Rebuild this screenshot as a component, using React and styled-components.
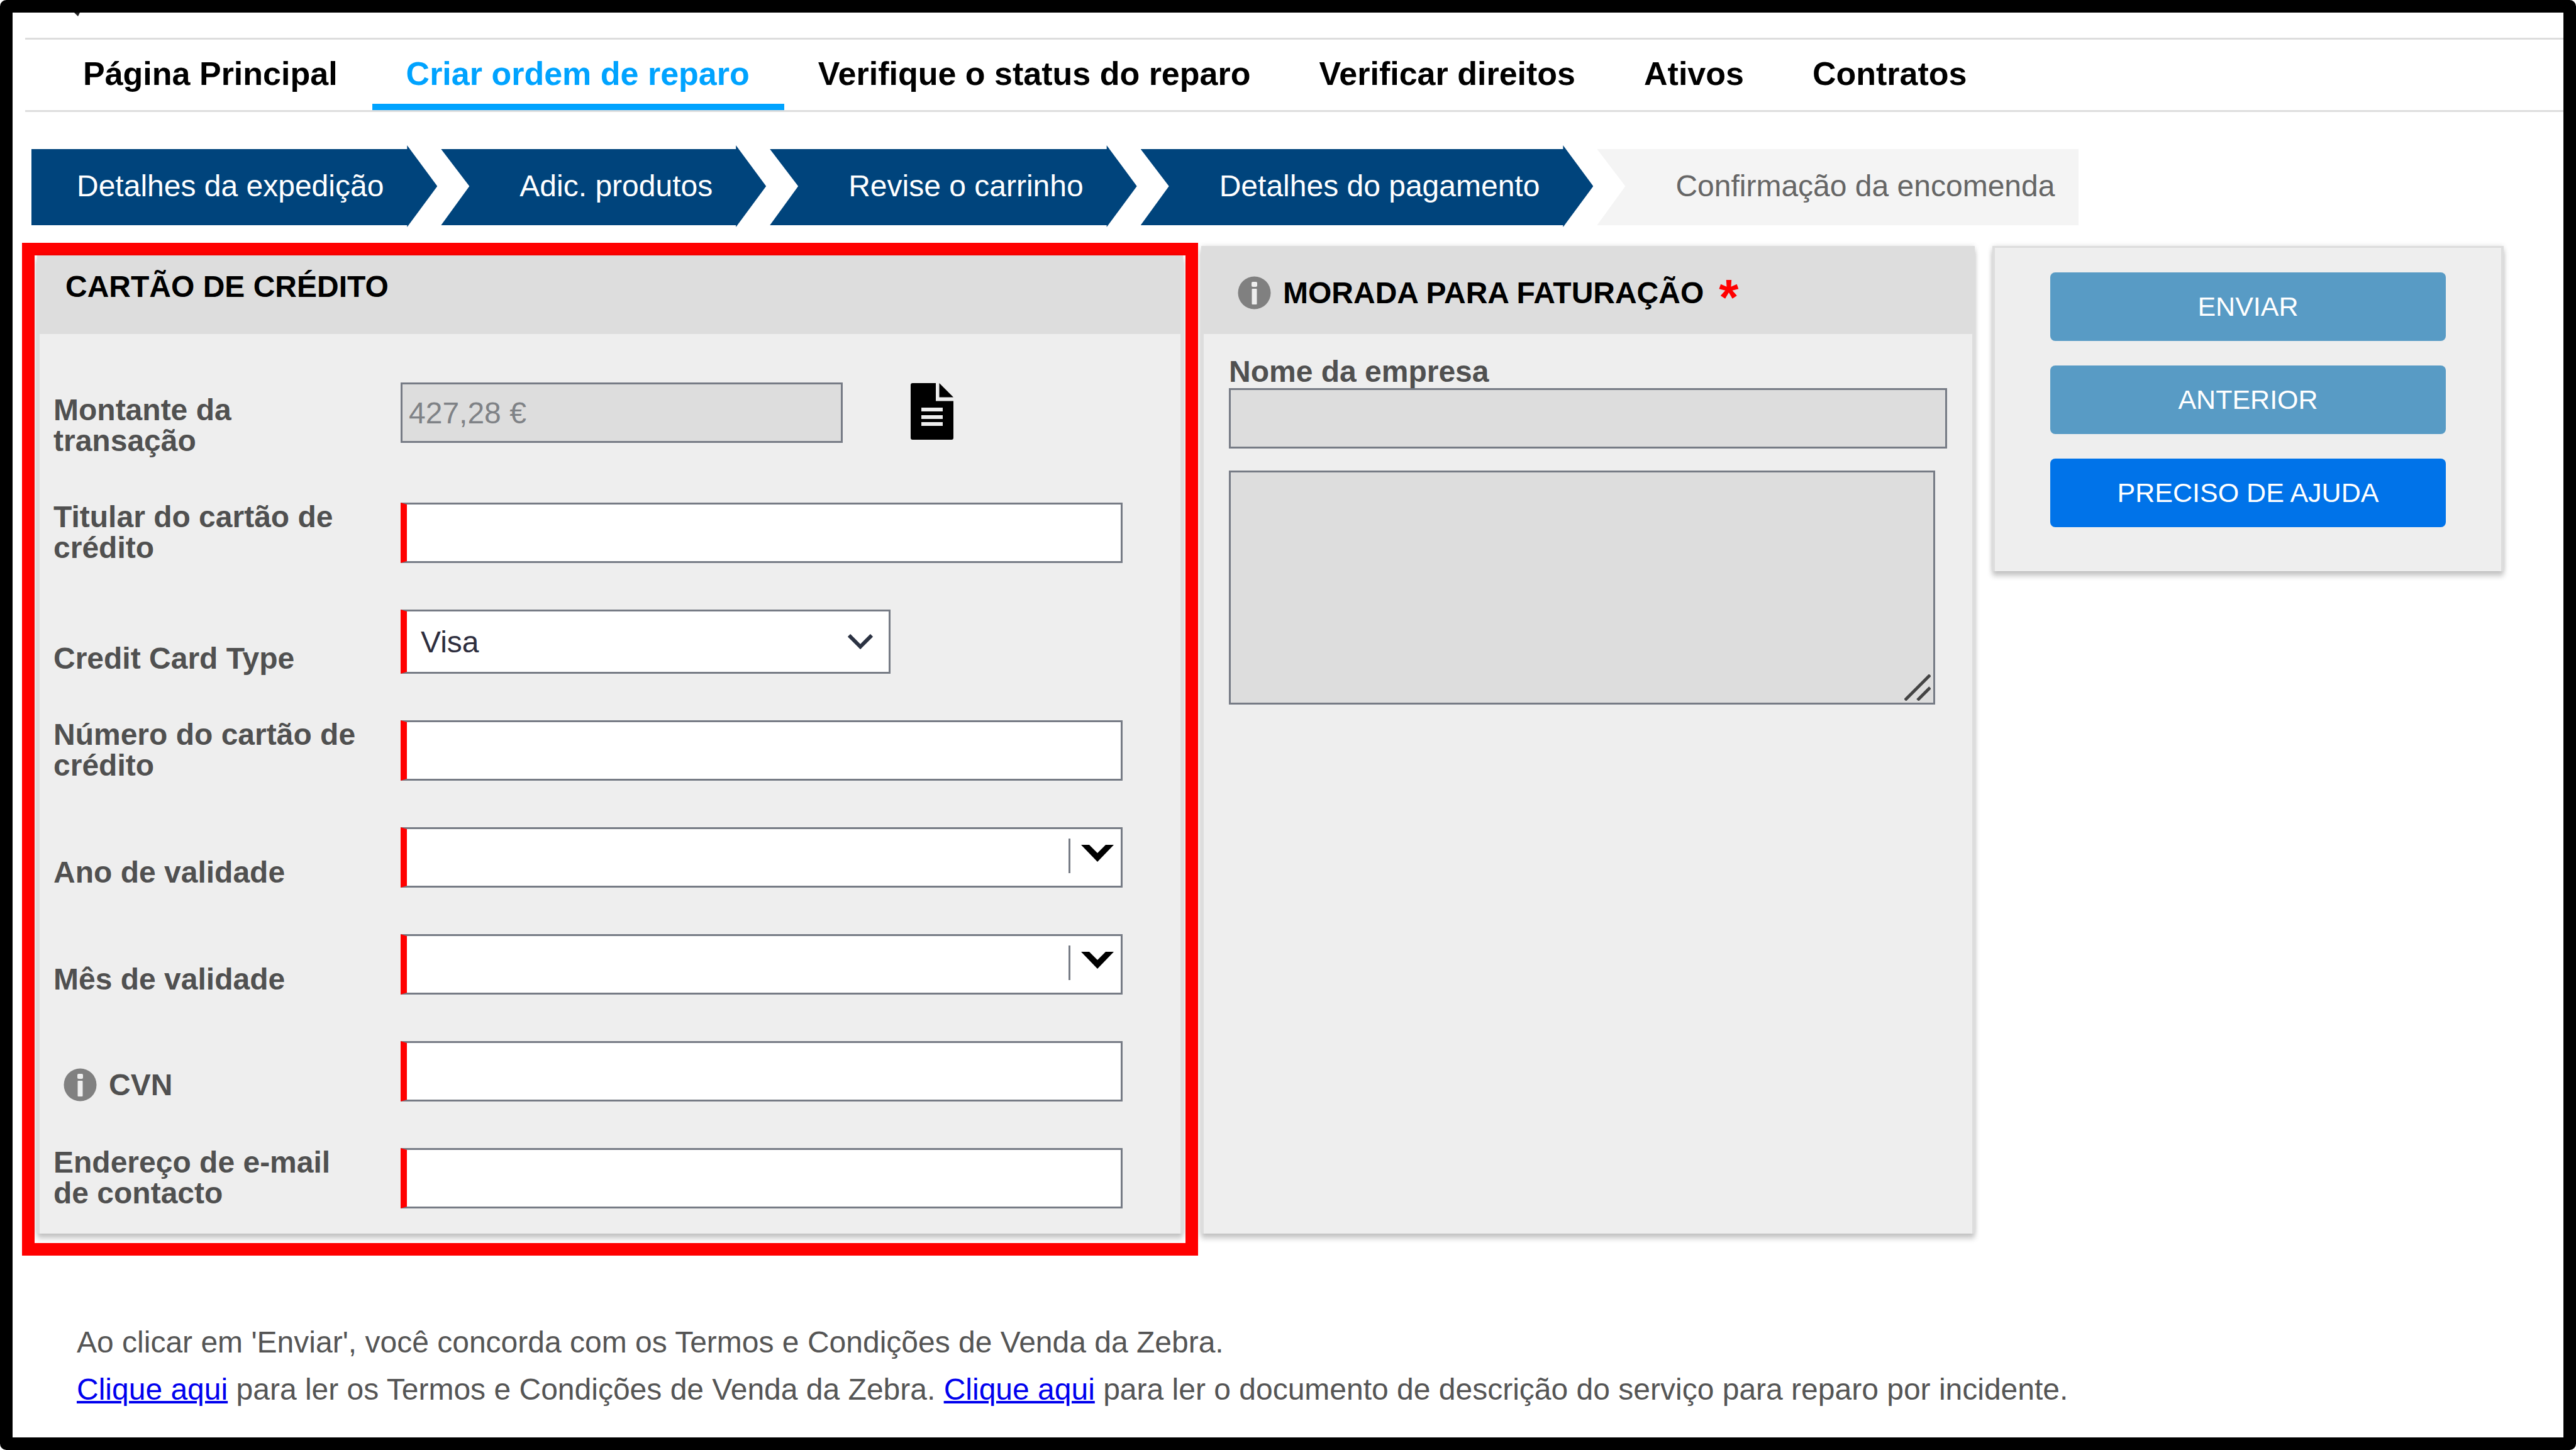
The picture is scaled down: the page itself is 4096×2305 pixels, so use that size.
import React from "react";
import styled, { createGlobalStyle } from "styled-components";

const GlobalStyle = createGlobalStyle`
  * {
    box-sizing: border-box;
  }
  body {
    margin: 0;
    background: #fff;
    font-family: "Liberation Sans", Arial, sans-serif;
    font-size: 48px;
    color: #555;
  }
  input, select, textarea, button {
    font: inherit;
    border-radius: 0;
    margin: 0;
  }
`;

const Page = styled.div`
  min-height: 100vh;
  border: 20px solid #000;
  border-radius: 10px;
`;

const TopBar = styled.div`
  height: 40px;
  padding-left: 98px;
`;

const Tail = styled.svg`
  display: block;
  width: 10px;
  height: 6px;
`;

const Nav = styled.nav`
  display: flex;
  margin-left: 20px;
  padding-left: 38px;
  height: 118px;
  border-top: 3px solid #ddd;
  border-bottom: 3px solid #ddd;
`;

const NavLink = styled.a`
  padding: 6px 55px 0 54px;
  line-height: 96px;
  font-size: 52px;
  font-weight: bold;
  text-decoration: none;
  white-space: nowrap;
  color: ${(p) => (p.$active ? "#00a3ff" : "#000")};
  border-bottom: 10px solid ${(p) => (p.$active ? "#00a3ff" : "transparent")};
`;

const Steps = styled.ol`
  display: flex;
  gap: 6px;
  list-style: none;
  margin: 53px 0 25px;
  padding: 0 0 0 30px;
`;

const Step = styled.li`
  height: 130px;
  line-height: 130px;
  padding: 0 85px 0 125px;
  white-space: nowrap;
  color: #fff;
  background: #00447c;
  clip-path: polygon(
    0 6px,
    calc(100% - 48px) 6px,
    calc(100% - 48px) 0,
    100% 50%,
    calc(100% - 48px) 100%,
    calc(100% - 48px) calc(100% - 3px),
    0 calc(100% - 3px),
    45px 50%
  );

  &:first-child {
    padding-left: 72px;
    clip-path: polygon(
      0 6px,
      calc(100% - 48px) 6px,
      calc(100% - 48px) 0,
      100% 50%,
      calc(100% - 48px) 100%,
      calc(100% - 48px) calc(100% - 3px),
      0 calc(100% - 3px)
    );
  }

  &:last-child {
    padding-right: 38px;
    color: #666;
    background: #f4f4f4;
    clip-path: polygon(
      0 6px,
      100% 6px,
      100% calc(100% - 3px),
      0 calc(100% - 3px),
      45px 50%
    );
  }
`;

const Columns = styled.main`
  display: grid;
  grid-template-columns: minmax(0, 1870fr) minmax(0, 1235fr) minmax(0, 841fr);
  padding: 0 95px 0 15px;
`;

const Highlight = styled.div`
  border: 20px solid #f00;
  padding: 0 4px 15px;
`;

const Card = styled.section`
  background: #eee;
  border: solid #ddd;
  border-width: 0 4px;
  box-shadow: 0 8px 8px rgba(0, 0, 0, 0.2), 0 0 8px rgba(0, 0, 0, 0.12);
`;

const BillingCard = styled(Card)`
  margin: 5px 0 35px 5px;
`;

const ActionCard = styled(Card)`
  align-self: start;
  display: flex;
  flex-direction: column;
  gap: 39px;
  margin: 5px 0 0 28px;
  padding: 39px 88px 70px;
  border-top-width: 3px;
`;

const CardHeader = styled.header`
  display: flex;
  align-items: center;
  height: ${(p) => (p.$tall ? "140px" : "125px")};
  padding: ${(p) => (p.$tall ? "9px 54px 0" : "0 41px 25px")};
  background: #ddd;
`;

const Title = styled.h2`
  margin: 0;
  font-size: 48px;
  line-height: 50px;
  color: #000;
  white-space: nowrap;
`;

const Star = styled.span`
  height: 50px;
  margin-left: 24px;
  font-size: 80px;
  font-weight: bold;
  line-height: 64px;
  color: #f00;
`;

const Form = styled.form`
  display: flex;
  flex-direction: column;
  gap: 74px;
  padding: 77px 92px 40px 22px;
`;

const Row = styled.div`
  display: flex;
  align-items: flex-end;
`;

const Label = styled.label`
  display: flex;
  align-items: center;
  flex: none;
  width: 500px;
  margin: -8px 52px 0 0;
  padding-left: ${(p) => (p.$inset ? "16px" : "0")};
  font-weight: bold;
  line-height: 49px;
  color: #505050;
`;

const Input = styled.input`
  display: block;
  height: 96px;
  width: 100%;
  padding: 0 10px;
  background: #fff;
  border: 3px solid #767b85;
  border-left: 10px solid #f00;
  outline: none;

  &:disabled {
    background: #ddd;
    color: #7f8286;
    border-left: 3px solid #767b85;
  }
`;

const AmountInput = styled(Input)`
  width: 703px;
  margin-bottom: 21px;
`;

const DocButton = styled.button`
  margin: 0 0 26px 108px;
  padding: 0;
  border: 0;
  background: none;
  line-height: 0;
`;

const Picker = styled.div`
  display: grid;
  flex: ${(p) => (p.$short ? "0 0 779px" : "1")};

  > * {
    grid-area: 1 / 1;
  }
`;

const Select = styled.select`
  appearance: none;
  width: 100%;
  height: ${(p) => (p.$tall ? "102px" : "96px")};
  padding: 0 22px;
  color: #2e2e3e;
  background: #fff;
  border: 3px solid #767b85;
  border-left: 10px solid #f00;
  outline: none;
`;

const Arrow = styled.span`
  display: flex;
  justify-self: end;
  align-self: ${(p) => (p.$top ? "start" : "center")};
  gap: 17px;
  margin: ${(p) => (p.$top ? "18px 14px 0 0" : "0 28px 0 0")};
  pointer-events: none;
`;

const Divider = styled.span`
  width: 3px;
  height: 55px;
  background: #767b85;
`;

const Billing = styled.div`
  padding: 36px 40px 0;
`;

const BillingLabel = styled.label`
  display: block;
  margin-bottom: 2px;
  font-weight: bold;
  line-height: 48px;
  color: #505050;
`;

const AreaWrap = styled.div`
  display: grid;
  margin: 35px 19px 0 0;

  > * {
    grid-area: 1 / 1;
  }
`;

const Area = styled.textarea`
  height: 372px;
  resize: none;
  background: #ddd;
  border: 3px solid #767b85;
`;

const Grip = styled.svg`
  place-self: end;
  margin: 0 7px 6px 0;
`;

const Action = styled.button`
  height: 109px;
  border: 0;
  border-radius: 8px;
  font-size: 43px;
  color: #fff;
  background: ${(p) => (p.$primary ? "#0073e9" : "#589bc5")};
`;

const Terms = styled.footer`
  padding: 100px 102px 0;
  line-height: 75px;

  p {
    margin: 0;
  }
  a {
    color: #00e;
    text-decoration-thickness: 4px;
  }
`;

const InfoSvg = styled.svg`
  flex: none;
  margin-right: 19px;
`;

function InfoIcon() {
  return (
    <InfoSvg width="53" height="53" viewBox="0 0 53 53">
      <circle cx="26.5" cy="26.5" r="26" fill="#808080" />
      <rect x="22" y="9" width="9" height="8" rx="2" fill="#eee" />
      <rect x="22.5" y="20" width="8" height="25" rx="1" fill="#eee" />
    </InfoSvg>
  );
}

function DocIcon() {
  return (
    <svg width="68" height="90" viewBox="0 0 68 90">
      <path d="M3 0H40V28.500H68V87Q68 90 65 90H3Q0 90 0 87V3Q0 0 3 0Z" fill="#000" />
      <path d="M45.500 0L68 22.500H45.500Z" fill="#000" />
      <path d="M17 42H51M17 54H51M17 65H51" stroke="#eee" strokeWidth="6" />
    </svg>
  );
}

const tabs = [
  "Página Principal",
  "Criar ordem de reparo",
  "Verifique o status do reparo",
  "Verificar direitos",
  "Ativos",
  "Contratos",
];

const steps = [
  "Detalhes da expedição",
  "Adic. produtos",
  "Revise o carrinho",
  "Detalhes do pagamento",
  "Confirmação da encomenda",
];

function TextRow({ id, label, info }) {
  return (
    <Row>
      <Label htmlFor={id} $inset={info}>
        {info && <InfoIcon />}
        {label}
      </Label>
      <Input id={id} type="text" />
    </Row>
  );
}

function DateRow({ id, label }) {
  return (
    <Row>
      <Label htmlFor={id}>{label}</Label>
      <Picker>
        <Select id={id}>
          <option value=""></option>
        </Select>
        <Arrow $top>
          <Divider />
          <svg width="52" height="38" viewBox="0 0 52 38">
            <path d="M0 10H13L26 23L39 10H52L26 37Z" fill="#000" />
          </svg>
        </Arrow>
      </Picker>
    </Row>
  );
}

export default function App() {
  return (
    <>
      <GlobalStyle />
      <Page>
        <TopBar>
          <Tail viewBox="0 0 10 6">
            <path d="M0 0H9L6 6Z" fill="#222" />
          </Tail>
        </TopBar>
        <Nav>
          {tabs.map((tab, i) => (
            <NavLink key={tab} href="#" $active={i === 1}>
              {tab}
            </NavLink>
          ))}
        </Nav>
        <Steps>
          {steps.map((step) => (
            <Step key={step}>{step}</Step>
          ))}
        </Steps>
        <Columns>
          <Highlight>
            <Card>
              <CardHeader>
                <Title>CARTÃO DE CRÉDITO</Title>
              </CardHeader>
              <Form>
                <Row>
                  <Label htmlFor="amount">Montante da transação</Label>
                  <AmountInput id="amount" type="text" defaultValue="427,28 €" disabled />
                  <DocButton type="button" aria-label="Documento">
                    <DocIcon />
                  </DocButton>
                </Row>
                <TextRow id="holder" label="Titular do cartão de crédito" />
                <Row>
                  <Label htmlFor="type">Credit Card Type</Label>
                  <Picker $short>
                    <Select id="type" $tall>
                      <option>Visa</option>
                    </Select>
                    <Arrow>
                      <svg width="40" height="24" viewBox="0 0 40 24">
                        <path d="M2 2L20 20L38 2" fill="none" stroke="#2b3242" strokeWidth="6" />
                      </svg>
                    </Arrow>
                  </Picker>
                </Row>
                <TextRow id="number" label="Número do cartão de crédito" />
                <DateRow id="year" label="Ano de validade" />
                <DateRow id="month" label="Mês de validade" />
                <TextRow id="cvn" label="CVN" info />
                <TextRow id="email" label="Endereço de e-mail de contacto" />
              </Form>
            </Card>
          </Highlight>
          <BillingCard>
            <CardHeader $tall>
              <InfoIcon />
              <Title>MORADA PARA FATURAÇÃO</Title>
              <Star>*</Star>
            </CardHeader>
            <Billing>
              <BillingLabel htmlFor="company">Nome da empresa</BillingLabel>
              <Input id="company" type="text" disabled />
              <AreaWrap>
                <Area aria-label="Morada" disabled />
                <Grip width="42" height="42" viewBox="0 0 42 42">
                  <path d="M1 41L41 1M21 41L41 21" stroke="#444" strokeWidth="5" />
                </Grip>
              </AreaWrap>
            </Billing>
          </BillingCard>
          <ActionCard>
            <Action type="button">ENVIAR</Action>
            <Action type="button">ANTERIOR</Action>
            <Action type="button" $primary>
              PRECISO DE AJUDA
            </Action>
          </ActionCard>
        </Columns>
        <Terms>
          <p>Ao clicar em 'Enviar', você concorda com os Termos e Condições de Venda da Zebra.</p>
          <p>
            <a href="#">Clique aqui</a> para ler os Termos e Condições de Venda da Zebra.{" "}
            <a href="#">Clique aqui</a> para ler o documento de descrição do serviço para reparo por
            incidente.
          </p>
        </Terms>
      </Page>
    </>
  );
}
